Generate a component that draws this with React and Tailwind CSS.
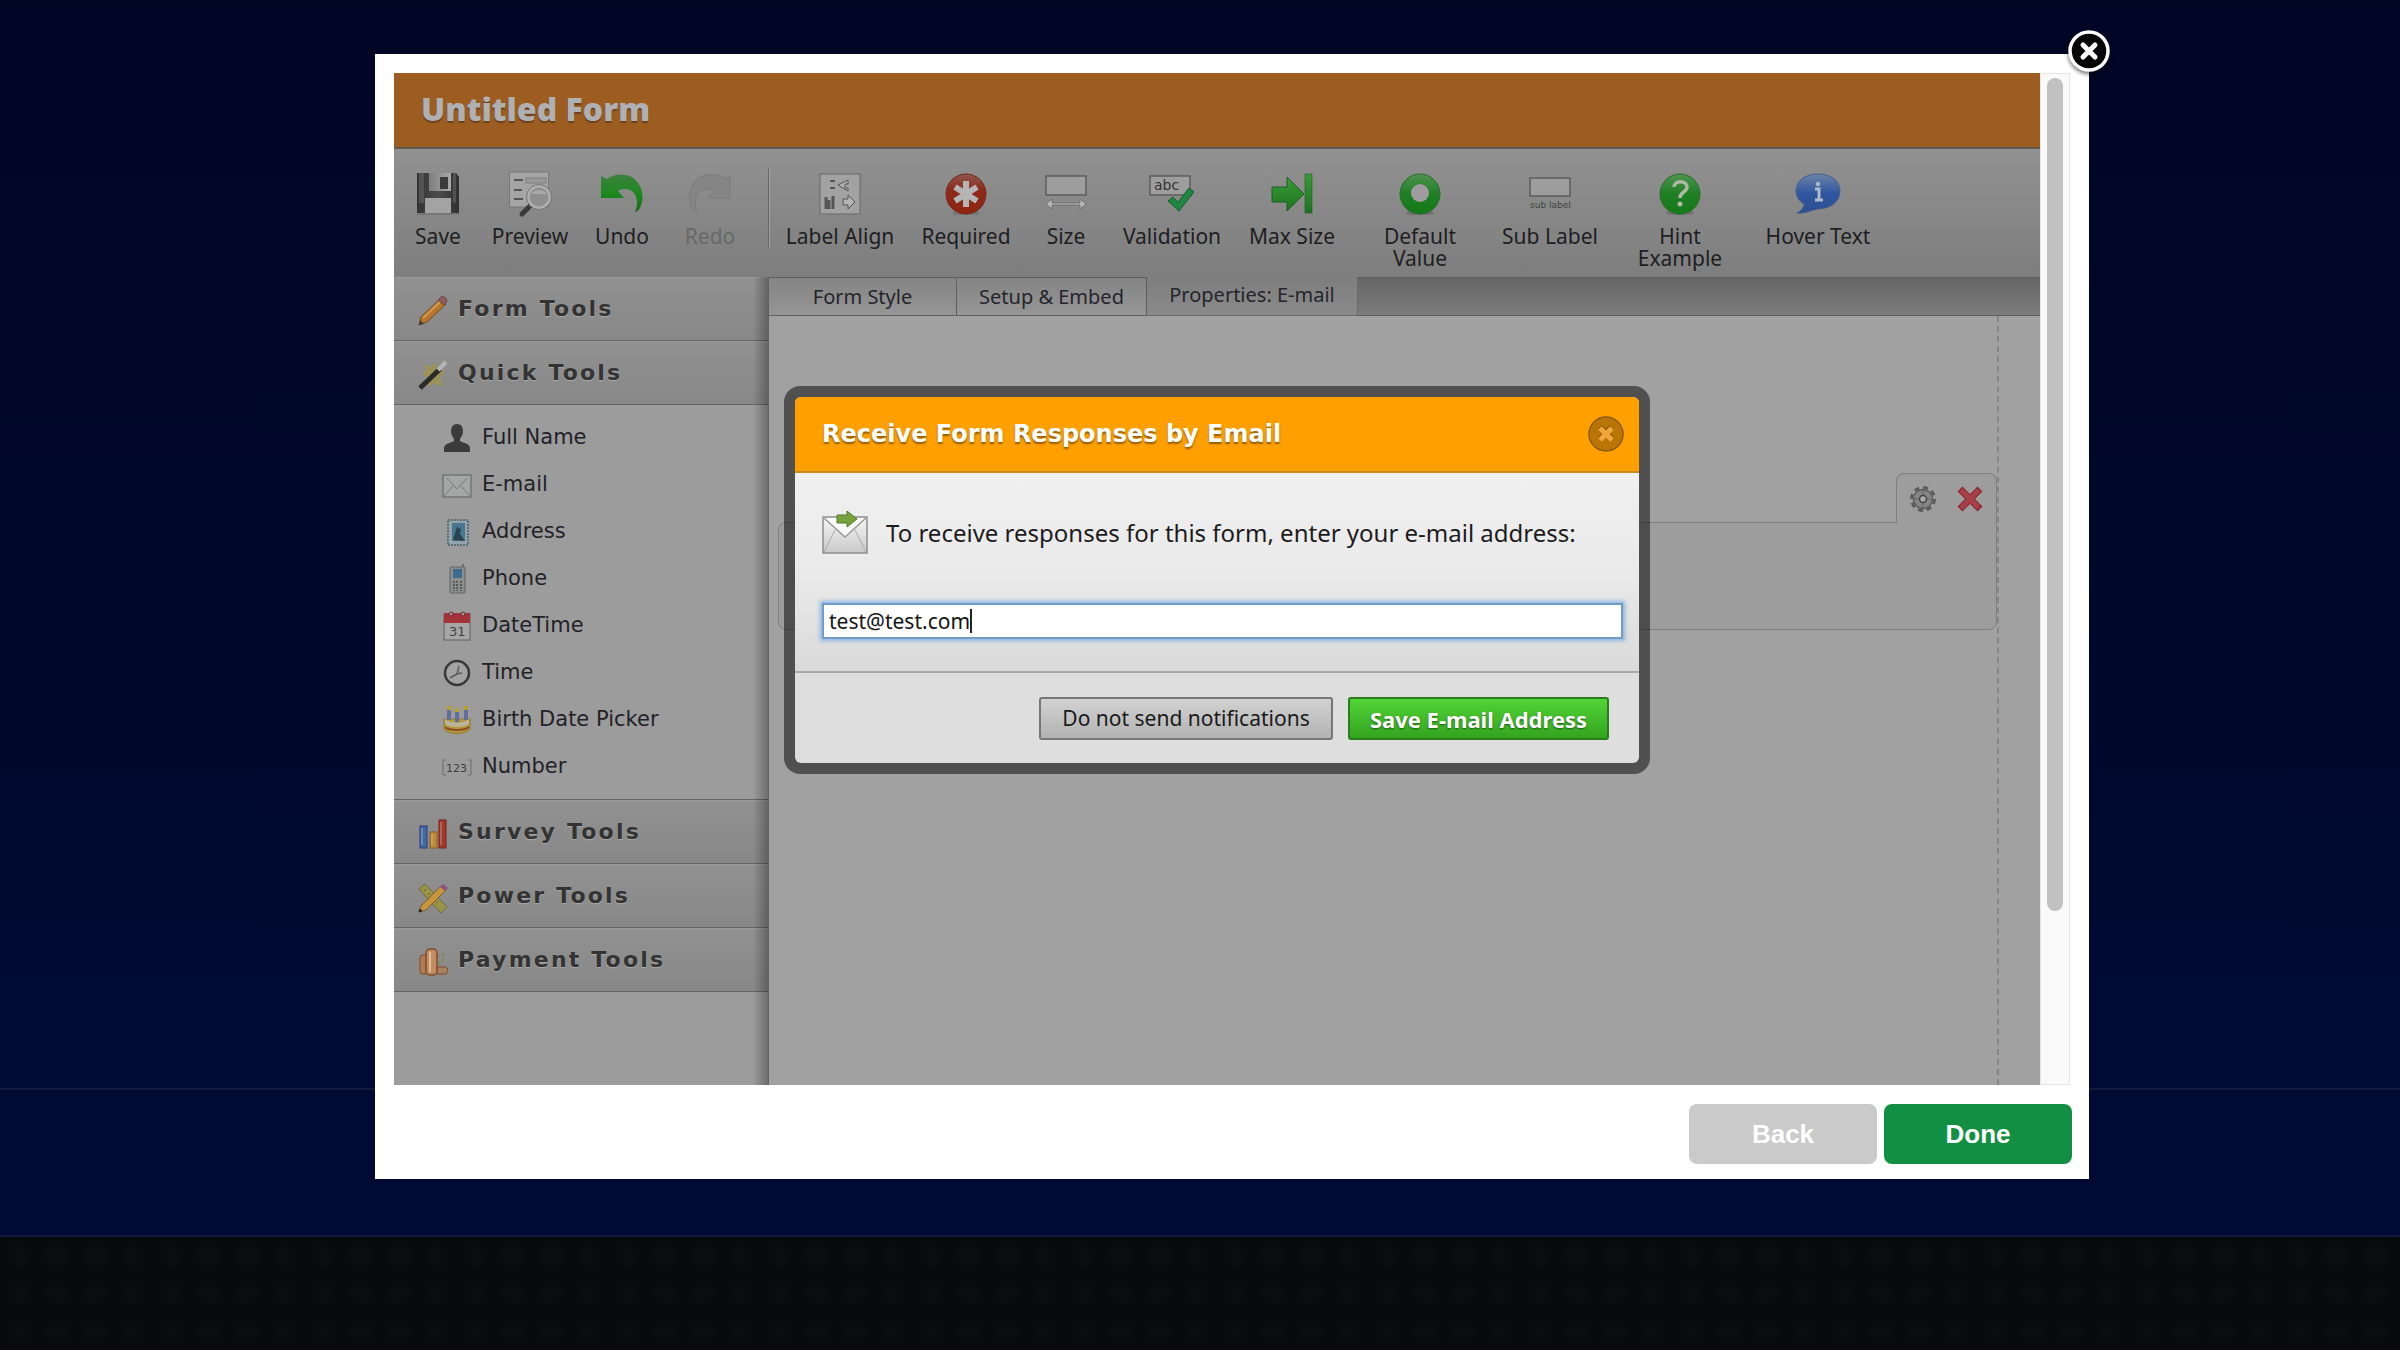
import React, { useState } from 'react';

/* ---------- toolbar icons (42x42) ---------- */

function SaveIcon() {
  return (
    <svg viewBox="0 0 42 42" className="w-[42px] h-[42px]" aria-hidden="true">
      <defs>
        <linearGradient id="disk" x1="0" y1="0" x2="1" y2="0">
          <stop offset="0" stopColor="#333" />
          <stop offset="0.5" stopColor="#4c4c4c" />
          <stop offset="1" stopColor="#303030" />
        </linearGradient>
        <linearGradient id="shutter" x1="0" y1="0" x2="1" y2="0">
          <stop offset="0" stopColor="#7d7d7d" />
          <stop offset="1" stopColor="#aaa" />
        </linearGradient>
      </defs>
      <path d="M0 0H39L42 4V42H0Z" fill="url(#disk)" />
      <path d="M2 0H7V30H2ZM36 0H39V30H36Z" fill="#666" opacity="0.6" />
      <rect x="12" y="0" width="22" height="18" fill="url(#shutter)" />
      <rect x="23" y="4" width="8" height="12" fill="#3a3a3a" />
      <rect x="8" y="25" width="26" height="16" fill="#a3a3a3" />
      <path d="M0 41H42" stroke="#777" strokeWidth="2" />
    </svg>
  );
}

function PreviewIcon() {
  return (
    <svg viewBox="0 0 42 42" className="w-[42px] h-[42px] overflow-visible" aria-hidden="true">
      <rect x="0.5" y="-1" width="39" height="35" fill="#a5a5a5" stroke="#777" />
      <path d="M5 7H14M5 17H13M5 26H14" stroke="#555" strokeWidth="2" />
      <path d="M17 5H37V10H17Z" fill="#999" stroke="#808080" />
      <path d="M22 32L13 41" stroke="#3a3a3a" strokeWidth="5" strokeLinecap="round" />
      <circle cx="30" cy="24" r="11" fill="#8f8f8f" stroke="#b0b0b0" strokeWidth="3" />
      <circle cx="30" cy="24" r="12.5" fill="none" stroke="#757575" />
      <path d="M22 21C25 16 35 16 38 21Z" fill="#a9a9a9" />
    </svg>
  );
}

function UndoIcon() {
  return (
    <svg viewBox="0 0 42 42" className="w-[42px] h-[42px]" aria-hidden="true">
      <defs>
        <linearGradient id="undo" x1="0" y1="0" x2="0" y2="1">
          <stop offset="0" stopColor="#3f8040" />
          <stop offset="0.5" stopColor="#1c8a1f" />
          <stop offset="1" stopColor="#126b14" />
        </linearGradient>
      </defs>
      <path
        d="M0 3L6 6C12 1 23 0 31 4C40 10 44 22 40 32C39 36 36 39 34 39C38 30 36 20 29 17C24 15 19 16 17 18L23 25H0Z"
        fill="url(#undo)"
      />
    </svg>
  );
}

function RedoIcon() {
  return (
    <svg viewBox="0 0 42 42" className="w-[42px] h-[42px]" aria-hidden="true">
      <path
        d="M41 3L36 6C30 1 19 0 11 4C2 10 -2 22 2 32C3 36 6 39 8 39C4 30 6 20 13 17C18 15 23 16 25 18L19 25H41Z"
        fill="#858585"
        stroke="#7b7b7b"
      />
    </svg>
  );
}

function LabelAlignIcon() {
  return (
    <svg viewBox="0 0 42 42" className="w-[42px] h-[42px]" aria-hidden="true">
      <rect x="1" y="1" width="40" height="40" fill="#a2a2a2" stroke="#777" strokeWidth="1.5" />
      <path d="M11 8H16M11 15H16" stroke="#555" strokeWidth="2" />
      <path d="M29 7V11H26V15H29V18L19 12Z" fill="#b3b3b3" stroke="#555" />
      <path d="M7 36V24M10 36V27M14 36V23" stroke="#555" strokeWidth="3" />
      <path d="M24 26H29V22L36 29L29 36V32H24Z" fill="#b3b3b3" stroke="#555" />
    </svg>
  );
}

function RequiredIcon() {
  return (
    <svg viewBox="0 0 42 42" className="w-[42px] h-[42px]" aria-hidden="true">
      <defs>
        <linearGradient id="req" x1="0" y1="0" x2="0" y2="1">
          <stop offset="0" stopColor="#90564e" />
          <stop offset="0.4" stopColor="#8c2a1a" />
          <stop offset="1" stopColor="#8f2510" />
        </linearGradient>
      </defs>
      <ellipse cx="21" cy="40" rx="14" ry="3" fill="#777" />
      <circle cx="21" cy="21" r="20" fill="url(#req)" stroke="#74281b" />
      <path d="M21 8V34M10 14L32 28M32 14L10 28" stroke="#b5b5b5" strokeWidth="6" />
    </svg>
  );
}

function SizeIcon() {
  return (
    <svg viewBox="0 0 42 42" className="w-[42px] h-[42px]" aria-hidden="true">
      <rect x="1" y="3" width="40" height="19" fill="#9d9d9d" stroke="#5c5c5c" strokeWidth="1.5" />
      <path d="M1 31L7 26V30H35V26L41 31L35 36V32H7V36Z" fill="#b8b8b8" stroke="#666" strokeWidth="0.8" />
    </svg>
  );
}

function ValidationIcon() {
  return (
    <svg viewBox="0 0 46 42" className="w-[46px] h-[42px]" aria-hidden="true">
      <rect x="1" y="3" width="40" height="19" fill="#9d9d9d" stroke="#5c5c5c" strokeWidth="1.5" />
      <text x="5" y="17" fontSize="14" fontFamily="DejaVu Sans, sans-serif" fill="#333">abc</text>
      <path d="M19 28L24 24L29 29L40 15L45 19L30 38Z" fill="#1f8540" stroke="#17602f" strokeLinejoin="round" />
    </svg>
  );
}

function MaxSizeIcon() {
  return (
    <svg viewBox="0 0 42 42" className="w-[42px] h-[42px]" aria-hidden="true">
      <defs>
        <linearGradient id="max" x1="0" y1="0" x2="0" y2="1">
          <stop offset="0" stopColor="#3a9b35" />
          <stop offset="1" stopColor="#1c7422" />
        </linearGradient>
      </defs>
      <path d="M1 14H16V4L33 21L16 38V29H1Z" fill="url(#max)" stroke="#1c5f20" />
      <rect x="34" y="1" width="7" height="39" fill="url(#max)" stroke="#1c5f20" strokeWidth="0.6" />
    </svg>
  );
}

function DefaultValueIcon() {
  return (
    <svg viewBox="0 0 42 42" className="w-[42px] h-[42px]" aria-hidden="true">
      <defs>
        <linearGradient id="ball" x1="0" y1="0" x2="0" y2="1">
          <stop offset="0" stopColor="#4f9350" />
          <stop offset="0.5" stopColor="#1f7f24" />
          <stop offset="1" stopColor="#157a17" />
        </linearGradient>
      </defs>
      <ellipse cx="21" cy="40" rx="14" ry="3" fill="#727272" />
      <circle cx="21" cy="21" r="20" fill="url(#ball)" stroke="#2a6d2c" />
      <circle cx="21" cy="20" r="9" fill="#a09ba0" />
    </svg>
  );
}

function SubLabelIcon() {
  return (
    <svg viewBox="0 0 42 42" className="w-[42px] h-[42px]" aria-hidden="true">
      <rect x="1" y="5" width="40" height="18" fill="#9d9d9d" stroke="#5c5c5c" strokeWidth="1.5" />
      <text x="1" y="35" fontSize="9" fontFamily="DejaVu Sans, sans-serif" fill="#444">sub label</text>
    </svg>
  );
}

function HintIcon() {
  return (
    <svg viewBox="0 0 42 42" className="w-[42px] h-[42px]" aria-hidden="true">
      <ellipse cx="21" cy="40" rx="14" ry="3" fill="#727272" />
      <circle cx="21" cy="21" r="20" fill="url(#ball)" stroke="#2a6d2c" />
      <path d="M15 14C15 7 28 7 28 14C28 19 21 19 21 25" fill="none" stroke="#b0b8a6" strokeWidth="3.5" />
      <circle cx="21" cy="31" r="2.5" fill="#b0b8a6" />
    </svg>
  );
}

function HoverIcon() {
  return (
    <svg viewBox="0 0 46 42" className="w-[46px] h-[42px]" aria-hidden="true">
      <defs>
        <linearGradient id="bubble" x1="0" y1="0" x2="0" y2="1">
          <stop offset="0" stopColor="#6d84a8" />
          <stop offset="0.5" stopColor="#2f56a0" />
          <stop offset="1" stopColor="#2d4f8e" />
        </linearGradient>
      </defs>
      <path
        d="M23 1C36 1 45 8 45 18C45 29 35 36 22 36C14 38 9 41 2 40C7 37 9 34 9 31C4 28 1 23 1 18C1 8 10 1 23 1Z"
        fill="url(#bubble)"
        stroke="#415f8f"
      />
      <path d="M20 16H24V26M20 27H28" fill="none" stroke="#aebbc9" strokeWidth="3" />
      <circle cx="23" cy="11" r="2.2" fill="#aebbc9" />
    </svg>
  );
}

/* ---------- sidebar icons (30x30) ---------- */

function PencilIcon() {
  return (
    <svg viewBox="0 0 30 30" className="w-[30px] h-[30px]" aria-hidden="true">
      <path d="M1 29L3 21L22 3L28 8L9 26Z" fill="#b5762e" stroke="#6e4a22" />
      <path d="M5 22L23 5" stroke="#d19a4e" strokeWidth="2" />
      <path d="M20 4L23 1C26 -1 31 4 28 7L26 9Z" fill="#8f5d5d" stroke="#6d4848" />
      <path d="M1 29L2 24L6 28Z" fill="#3c3c3c" />
    </svg>
  );
}

function WandIcon() {
  return (
    <svg viewBox="0 0 30 30" className="w-[30px] h-[30px]" aria-hidden="true">
      <path d="M5 4L12 7L18 2L19 9L27 12L22 17L24 27L16 23L9 27L10 18L4 13L9 10Z" fill="#a8973a" opacity="0.65" />
      <path d="M2 28L22 9" stroke="#2b2b2b" strokeWidth="5" />
      <path d="M20 10L28 2" stroke="#b5b5b5" strokeWidth="4" />
    </svg>
  );
}

function BarsIcon() {
  return (
    <svg viewBox="0 0 30 30" className="w-[30px] h-[30px]" aria-hidden="true">
      <rect x="2" y="7" width="7" height="22" fill="#4267a6" stroke="#2c3f74" />
      <rect x="12" y="13" width="7" height="16" fill="#c28a38" stroke="#8a5a24" />
      <rect x="21" y="1" width="7" height="28" fill="#a3372a" stroke="#78251b" />
      <path d="M4 9V26M14 15V26M23 3V26" stroke="#d0d0d0" strokeOpacity="0.3" strokeWidth="2" />
    </svg>
  );
}

function RulerIcon() {
  return (
    <svg viewBox="0 0 30 30" className="w-[30px] h-[30px]" aria-hidden="true">
      <path d="M1 6L7 1L29 24L23 30Z" fill="#98954a" stroke="#716d33" />
      <path d="M6 8L8 6M10 12L12 10M14 16L16 14M18 20L20 18" stroke="#5e5b2c" />
      <path d="M1 29L3 23L23 3L28 7L8 27Z" fill="#c8953f" stroke="#805c26" />
      <path d="M22 4L25 1L30 5L27 8Z" fill="#8b5382" />
      <path d="M1 29L2 26L4 28Z" fill="#2b2b2b" stroke="#2b2b2b" />
    </svg>
  );
}

function CoinsIcon() {
  return (
    <svg viewBox="0 0 30 30" className="w-[30px] h-[30px]" aria-hidden="true">
      <rect x="2" y="8" width="8" height="19" rx="3" fill="#b07a52" stroke="#82492a" />
      <path d="M19 20H27C31 20 30 27 27 27H19Z" fill="#a8825f" stroke="#82492a" />
      <path d="M19 10L27 6M20 16L27 12" stroke="#7a8a5c" strokeWidth="2" strokeDasharray="3 2" />
      <rect x="8" y="2" width="11" height="26" rx="4" fill="#c08c62" stroke="#82492a" strokeWidth="1.5" />
      <path d="M12 5V25" stroke="#e0bd9a" strokeWidth="2" />
    </svg>
  );
}

function PersonIcon() {
  return (
    <svg viewBox="0 0 30 30" className="w-[30px] h-[30px]" aria-hidden="true">
      <path
        d="M15 1C19 1 21 4 21 8C21 12 19 14 18 16V18C22 20 28 21 28 25V29H2V25C2 21 8 20 12 18V16C11 14 9 12 9 8C9 4 11 1 15 1Z"
        fill="#3b3b3b"
      />
    </svg>
  );
}

function MailIcon() {
  return (
    <svg viewBox="0 0 30 30" className="w-[30px] h-[30px]" aria-hidden="true">
      <rect x="1" y="5" width="28" height="22" fill="#a3a8a6" stroke="#707674" strokeWidth="1.5" />
      <path d="M5 8L15 19L25 8M2 26L11 16M28 26L19 16" fill="none" stroke="#747d7a" />
    </svg>
  );
}

function AddressIcon() {
  return (
    <svg viewBox="0 0 30 30" className="w-[30px] h-[30px]" aria-hidden="true">
      <rect x="6" y="3" width="20" height="25" fill="#94a3a9" stroke="#5b7078" strokeDasharray="2 1" strokeWidth="2" />
      <rect x="10" y="6" width="13" height="18" fill="#477890" />
      <path d="M11 23L15 10L19 12L18 17L23 24" fill="#2a424e" />
    </svg>
  );
}

function PhoneIcon() {
  return (
    <svg viewBox="0 0 30 30" className="w-[30px] h-[30px]" aria-hidden="true">
      <path d="M21 0V5" stroke="#6c6c6c" strokeWidth="2" />
      <rect x="8" y="3" width="15" height="26" rx="1" fill="#8b908f" stroke="#5d6361" />
      <rect x="11" y="5" width="9" height="9" fill="#3c6b90" />
      <path d="M12 17V27M15 17V27M19 17V27" stroke="#5b5b5b" strokeDasharray="2 1" strokeWidth="2" />
    </svg>
  );
}

function CalendarIcon() {
  return (
    <svg viewBox="0 0 30 30" className="w-[30px] h-[30px]" aria-hidden="true">
      <rect x="2" y="3" width="26" height="26" fill="#a6a6a6" stroke="#606060" />
      <rect x="2" y="2" width="26" height="10" fill="#a43239" />
      <circle cx="9" cy="3" r="2" fill="#9b9b9b" stroke="#6d2a2e" />
      <circle cx="21" cy="3" r="2" fill="#9b9b9b" stroke="#6d2a2e" />
      <text x="7" y="25" fontSize="13" fontFamily="DejaVu Sans, sans-serif" fill="#444">31</text>
    </svg>
  );
}

function ClockIcon() {
  return (
    <svg viewBox="0 0 30 30" className="w-[30px] h-[30px]" aria-hidden="true">
      <circle cx="15" cy="15" r="12" fill="#a3a3a3" stroke="#383838" strokeWidth="2.5" />
      <path d="M17 8L15 16L20 15M15 16L8 20" fill="none" stroke="#5a5a5a" strokeWidth="1.5" />
    </svg>
  );
}

function CakeIcon() {
  return (
    <svg viewBox="0 0 30 30" className="w-[30px] h-[30px]" aria-hidden="true">
      <path d="M2 14H28V24C24 30 6 30 2 24Z" fill="#b59a3a" stroke="#92792a" />
      <path d="M3 14C8 19 22 19 27 14V19C22 23 8 23 3 19Z" fill="#b9b3a0" />
      <path d="M3 22C8 26 22 26 27 22" fill="none" stroke="#8f4a2a" strokeWidth="2" />
      <path d="M7 5V15M15 7V17M24 5V15" stroke="#5f6f9c" strokeWidth="4" />
      <path d="M7 1V5M15 3V7M24 1V5" stroke="#b7a02c" strokeWidth="4" />
    </svg>
  );
}

function NumberIcon() {
  return (
    <svg viewBox="0 0 30 30" className="w-[30px] h-[30px]" aria-hidden="true">
      <path d="M4 8H1V23H4M26 8H29V23H26" fill="none" stroke="#6d6d6d" />
      <text x="4" y="20" fontSize="11" fontFamily="DejaVu Sans, sans-serif" fill="#3c3c3c">123</text>
    </svg>
  );
}

/* ---------- data ---------- */

const fileTools = [
  { label: 'Save', icon: <SaveIcon />, width: 'w-[84px]' },
  { label: 'Preview', icon: <PreviewIcon />, width: 'w-[100px]' },
  { label: 'Undo', icon: <UndoIcon />, width: 'w-[84px]' },
  { label: 'Redo', icon: <RedoIcon />, width: 'w-[92px]', disabled: true },
];

const fieldTools = [
  { label: 'Label Align', icon: <LabelAlignIcon />, width: 'w-[136px]' },
  { label: 'Required', icon: <RequiredIcon />, width: 'w-[116px]' },
  { label: 'Size', icon: <SizeIcon />, width: 'w-[84px]' },
  { label: 'Validation', icon: <ValidationIcon />, width: 'w-[128px]' },
  { label: 'Max Size', icon: <MaxSizeIcon />, width: 'w-[112px]' },
  { label: 'Default Value', icon: <DefaultValueIcon />, width: 'w-[144px]' },
  { label: 'Sub Label', icon: <SubLabelIcon />, width: 'w-[116px]' },
  { label: 'Hint Example', icon: <HintIcon />, width: 'w-[144px]' },
  { label: 'Hover Text', icon: <HoverIcon />, width: 'w-[132px]' },
];

const quickTools = [
  { label: 'Full Name', icon: <PersonIcon /> },
  { label: 'E-mail', icon: <MailIcon /> },
  { label: 'Address', icon: <AddressIcon /> },
  { label: 'Phone', icon: <PhoneIcon /> },
  { label: 'DateTime', icon: <CalendarIcon /> },
  { label: 'Time', icon: <ClockIcon /> },
  { label: 'Birth Date Picker', icon: <CakeIcon /> },
  { label: 'Number', icon: <NumberIcon /> },
];

/* ---------- pieces ---------- */

function ToolButton({ tool }) {
  return (
    <button
      type="button"
      disabled={tool.disabled}
      className={`${tool.width} shrink-0 flex flex-col items-center gap-2.5 px-6 ${tool.disabled ? 'text-[#686868]' : 'text-[#1e1e22]'}`}
    >
      {tool.icon}
      <span className={tool.label === 'Default Value' || tool.label === 'Hint Example' ? '' : 'whitespace-nowrap'}>
        {tool.label}
      </span>
    </button>
  );
}

function Toolbar() {
  return (
    <div className="h-[130px] flex items-start pt-6 pl-0.5 border-t-2 border-t-[#5e5c52] bg-linear-to-b from-[#919191] to-[#7e7e7e] font-['Noto_Sans',sans-serif] text-[21px] leading-[22px]">
      {fileTools.map(tool => <ToolButton key={tool.label} tool={tool} />)}
      <div className="w-0.5 h-20 ml-3 mr-0.5 -mt-1 shrink-0 border-l border-l-[#666] bg-[#a0a0a0]"></div>
      {fieldTools.map(tool => <ToolButton key={tool.label} tool={tool} />)}
    </div>
  );
}

function SidebarHeader({ icon, children, open }) {
  return (
    <button
      type="button"
      aria-expanded={!!open}
      className="w-full h-16 flex items-center gap-2.5 pl-6 pb-0.5 border-t border-t-[#999] border-b border-b-[#656565] bg-linear-to-b from-[#919191] to-[#888] font-bold text-[22px] tracking-widest text-[#333] [text-shadow:0_1px_1px_#aaa]"
    >
      <span className="pt-1.5">{icon}</span>
      {children}
    </button>
  );
}

function Sidebar() {
  return (
    <aside className="relative w-[375px] shrink-0 bg-[#9c9c9c] font-['DejaVu_Sans',sans-serif]">
      <SidebarHeader icon={<PencilIcon />}>Form Tools</SidebarHeader>
      <SidebarHeader icon={<WandIcon />} open>Quick Tools</SidebarHeader>
      <ul className="py-[9px] pl-12 border-b border-b-[#656565]">
        {quickTools.map(tool => (
          <li key={tool.label} className="h-[47px]">
            <button type="button" className="h-full flex items-center gap-2.5 text-[21px] text-[#222228]">
              {tool.icon}
              {tool.label}
            </button>
          </li>
        ))}
      </ul>
      <SidebarHeader icon={<BarsIcon />}>Survey Tools</SidebarHeader>
      <SidebarHeader icon={<RulerIcon />}>Power Tools</SidebarHeader>
      <SidebarHeader icon={<CoinsIcon />}>Payment Tools</SidebarHeader>
      {/* Shadow cast by the form canvas */}
      <div className="absolute inset-y-0 right-0 w-4 border-r border-r-[#606060] bg-linear-to-r from-transparent to-black/30"></div>
    </aside>
  );
}

function Tabs() {
  return (
    <div role="tablist" className="h-[39px] flex font-['Noto_Sans',sans-serif] text-[20px] text-[#25252c]">
      <button type="button" role="tab" aria-selected="false" className="w-[188px] border-y border-r border-[#5e5e5e] bg-linear-to-b from-[#848484] to-[#969696]">
        Form Style
      </button>
      <button type="button" role="tab" aria-selected="false" className="w-[190px] border-y border-r border-[#5e5e5e] bg-linear-to-b from-[#848484] to-[#969696]">
        Setup &amp; Embed
      </button>
      <button type="button" role="tab" aria-selected="true" className="w-[211px] pb-0.5 border-b border-r border-[#6a6a6a] bg-linear-to-b from-[#7e7e7e] to-[#8a8a8a]">
        Properties: E-mail
      </button>
      <div className="flex-1 border-y border-[#5e5e5e] bg-linear-to-b from-[#656565] to-[#7d7d7d]"></div>
    </div>
  );
}

function FormCanvas() {
  return (
    <div className="flex-1 mr-[41px] pt-[157px] pl-[9px] border-r-2 border-dashed border-r-[#868686]">
      <div className="flex flex-col items-end">
        <div className="relative z-10 w-[101px] h-[50px] -mb-px flex items-center justify-between pl-3 pr-3 rounded-t-lg border border-b-0 border-[#808080] bg-[#9d9d9d]">
          <button type="button" aria-label="Field settings">
            <svg viewBox="0 0 28 28" className="w-7 h-7">
              <circle cx="14" cy="14" r="11.5" fill="none" stroke="#5c5c5c" strokeWidth="3" strokeDasharray="5 4" />
              <circle cx="14" cy="14" r="9.5" fill="#868686" stroke="#5c5c5c" strokeWidth="1.5" />
              <path d="M14 5V10M14 18V23M5 14H10M18 14H23" stroke="#666" />
              <circle cx="14" cy="14" r="3.5" fill="#aaa" stroke="#444" strokeWidth="1.5" />
            </svg>
          </button>
          <button type="button" aria-label="Remove field">
            <svg viewBox="0 0 28 28" className="w-7 h-7">
              <path d="M4 4L24 24M24 4L4 24" stroke="#8a2730" strokeWidth="7" />
              <path d="M5 5L23 23M23 5L5 23" stroke="#a8404a" strokeWidth="5" />
            </svg>
          </button>
        </div>
        <div className="w-full h-[108px] rounded-l-lg rounded-br-lg border border-[#808080] bg-[#9d9d9d]"></div>
      </div>
    </div>
  );
}

function EmailDialog() {
  const [email, setEmail] = useState('test@test.com');

  return (
    <div
      role="dialog"
      aria-labelledby="dialog-title"
      className="absolute z-20 top-[313px] left-1/2 -translate-x-1/2 w-[866px] p-[11px] rounded-2xl bg-black/50"
    >
      <div className="rounded-md overflow-hidden bg-[#dedede] font-['Noto_Sans',sans-serif]">
        <div className="h-[76px] flex items-center justify-between pl-[27px] pr-[15px] border-b-2 border-b-[#c98a1e] bg-[#ffa000]">
          <h2
            id="dialog-title"
            className="font-['DejaVu_Sans',sans-serif] font-bold text-[24px] text-white [text-shadow:0_2px_2px_rgba(0,0,0,0.45)]"
          >
            Receive Form Responses by Email
          </h2>
          <button type="button" aria-label="Close dialog">
            <svg viewBox="0 0 36 36" className="w-9 h-9">
              <circle cx="18" cy="18" r="17" fill="#b97606" stroke="#8d5a06" strokeWidth="1.5" />
              <path d="M12 11L24 23M24 11L12 23" stroke="#8a5a0a" strokeWidth="6" />
              <path d="M12 12L24 24M24 12L12 24" stroke="#f3a73a" strokeWidth="5" />
            </svg>
          </button>
        </div>

        <div className="h-[200px] pt-[39px] pl-[27px] pr-4 border-b-2 border-b-[#a8a8a8] bg-linear-to-b from-[#f0f0f0] via-[#eaeaea] to-[#dadada]">
          <label htmlFor="email" className="flex items-center gap-[18px] text-[24px] text-[#1c1c20]">
            <svg viewBox="0 0 46 42" className="w-[46px] h-[42px] overflow-visible" aria-hidden="true">
              <defs>
                <linearGradient id="env" x1="0" y1="0" x2="0" y2="1">
                  <stop offset="0" stopColor="#f6f6f6" />
                  <stop offset="1" stopColor="#c9c9c9" />
                </linearGradient>
              </defs>
              <rect x="1" y="5" width="44" height="36" fill="url(#env)" stroke="#8f8f8f" strokeWidth="1.5" />
              <path d="M2 40L13 18M44 40L33 18" stroke="#aaa" />
              <path d="M2 6L23 25L44 6" fill="#fafafa" stroke="#999" strokeWidth="1.5" />
              <path d="M15 3H25V-1L35 7L25 15V11H15Z" fill="#77a13c" stroke="#547a28" />
            </svg>
            To receive responses for this form, enter your e-mail address:
          </label>
          <div className="relative mt-[49px]">
            <input
              id="email"
              type="email"
              value={email}
              onChange={(e) => setEmail(e.target.value)}
              className="block w-full h-9 px-[5px] border-2 border-[#6f9cc9] bg-white text-[21px] text-[#141414] outline-none shadow-[0_0_4px_2px_#8db5e2]"
            />
            <span className="absolute left-[148px] top-1.5 w-0.5 h-6 bg-[#222]"></span>
          </div>
        </div>

        <div className="h-[90px] flex items-start justify-end gap-[15px] pt-6 pr-[30px] leading-none">
          <button type="button" className="w-[294px] h-[43px] rounded-[3px] border-2 border-[#777] bg-linear-to-b from-[#d2d2d2] to-[#b2b2b2] text-[21px] text-[#1a1a1a]">
            Do not send notifications
          </button>
          <button type="button" className="w-[261px] h-[43px] rounded-[3px] border-2 border-[#2a7d1c] bg-linear-to-b from-[#52d436] to-[#33a41f] text-[22px] font-bold text-white [text-shadow:0_1px_2px_rgba(0,0,0,0.5)]">
            Save E-mail Address
          </button>
        </div>
      </div>
    </div>
  );
}

function App() {
  return (
    <div className="relative min-h-screen flex flex-col bg-[#000a33]">
      {/* Page behind the lightbox */}
      <div className="flex-1 bg-linear-to-b from-[#000624] to-[#000a33]"></div>
      <div className="h-[149px] border-y-2 border-y-[#131b3c]"></div>
      <footer className="h-[113px] bg-[#08090d] bg-[radial-gradient(#0b0c10_30%,transparent_60%)] bg-size-[38px_38px]"></footer>

      <div className="absolute inset-x-0 top-0 pt-[54px] pl-[375px] pr-[311px]">
        <div className="relative bg-white p-[19px] pb-[15px]">
          <button type="button" aria-label="Close" className="absolute -top-[25px] -right-[22px]">
            <svg viewBox="0 0 44 44" className="w-11 h-11 drop-shadow-[0_2px_2px_rgba(0,0,0,0.6)]">
              <circle cx="22" cy="22" r="19" fill="#070707" stroke="#fff" strokeWidth="3.5" />
              <path d="M16 16L28 28M28 16L16 28" stroke="#fff" strokeWidth="5" strokeLinecap="round" />
            </svg>
          </button>

          <div className="flex">
            <div className="relative flex-1">
              <header className="h-[74px] flex items-center pl-[27px] bg-[#9e5d20]">
                <h1 className="pb-0.5 font-['Open_Sans',sans-serif] font-extrabold text-[32px] leading-10 text-[#aeb0b3] [text-shadow:0_2px_1px_rgba(70,50,30,0.6)]">
                  Untitled Form
                </h1>
              </header>
              <Toolbar />
              <div className="h-[808px] flex">
                <Sidebar />
                <main className="flex-1 flex flex-col bg-[#a1a1a1]">
                  <Tabs />
                  <FormCanvas />
                </main>
              </div>
              <EmailDialog />
            </div>
            {/* Scroll track */}
            <div className="w-[30px] flex items-start justify-center pt-1 border border-[#e6e6e6] bg-[#fafafa]">
              <div className="w-4 h-[833px] rounded-full bg-[#c1c1c1]"></div>
            </div>
          </div>

          <div className="mt-[19px] -mr-[2px] flex justify-end gap-[7px] font-['Liberation_Sans',sans-serif] font-bold text-[26px] text-white">
            <button type="button" className="w-[188px] h-[60px] rounded-lg bg-[#cacaca]">Back</button>
            <button type="button" className="w-[188px] h-[60px] rounded-lg bg-[#128f43]">Done</button>
          </div>
        </div>
      </div>
    </div>
  );
}

export default App;
